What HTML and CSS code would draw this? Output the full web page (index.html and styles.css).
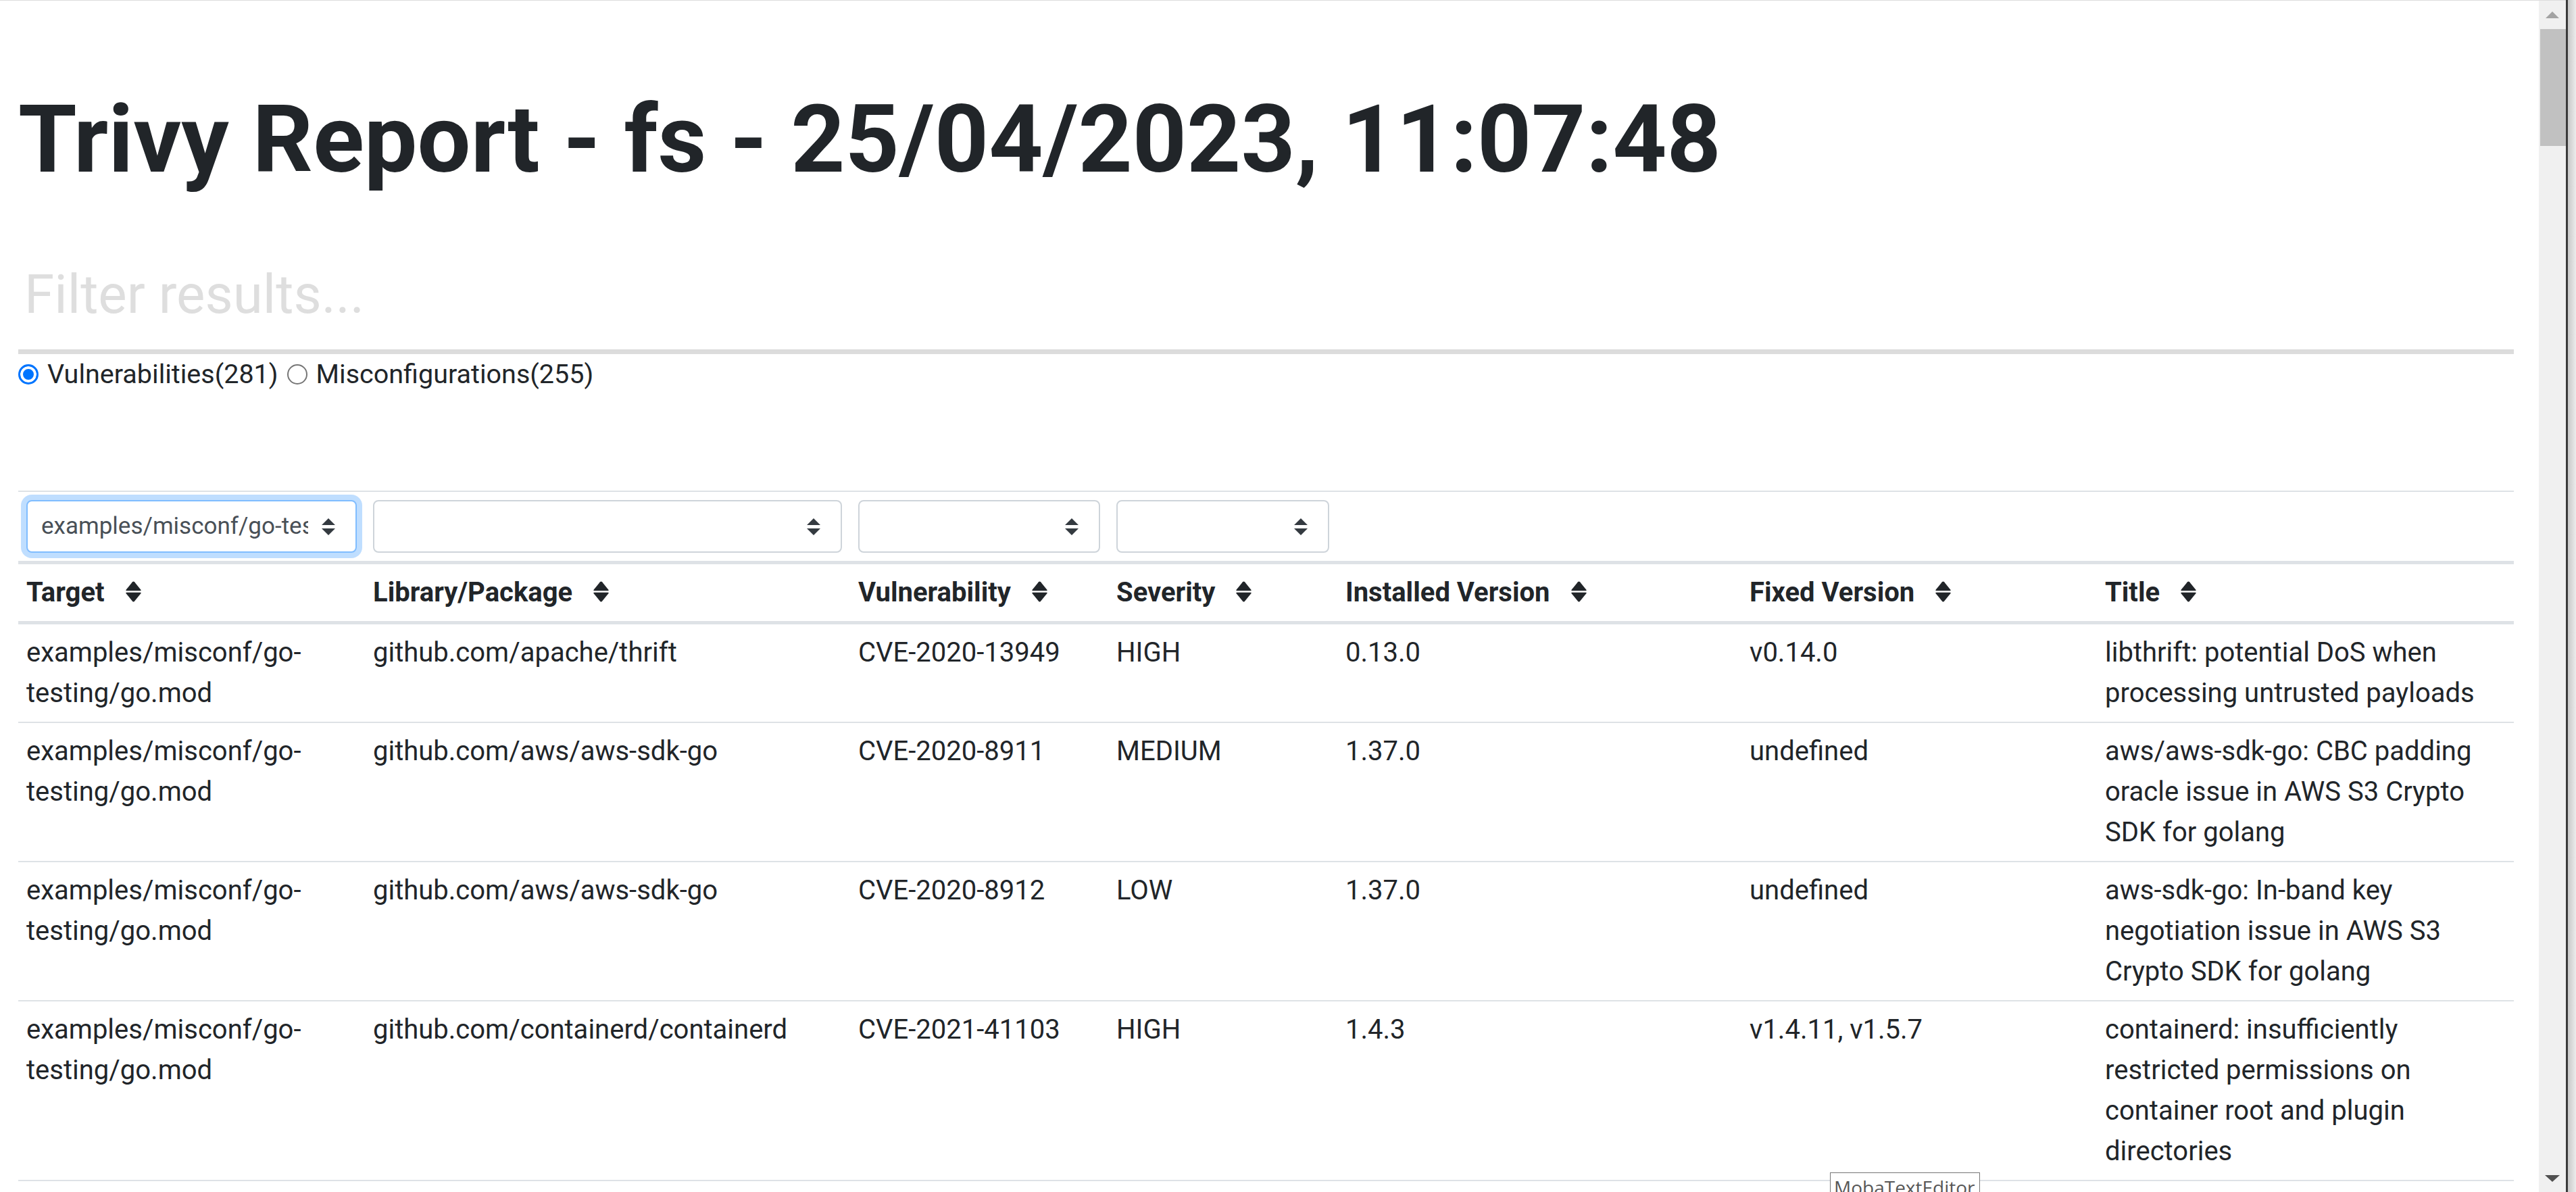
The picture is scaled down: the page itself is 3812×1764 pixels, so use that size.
FILE: index.html
```html
<!DOCTYPE html>
<html lang="en">
<head>
<meta charset="utf-8">
<title>Trivy Report</title>
<link rel="stylesheet" href="styles.css">
</head>
<body>
<div class="screen">
  <div class="window">
    <div class="viewport">
      <main class="report">
        <h1 class="title">Trivy Report - fs - 25/04/2023, 11:07:48</h1>
        <input class="filter" type="text" placeholder="Filter results...">
        <div class="tabs">
          <label class="tab"><input class="radio" type="radio" name="kind" checked><span>Vulnerabilities(281)</span></label>
          <label class="tab"><input class="radio" type="radio" name="kind"><span>Misconfigurations(255)</span></label>
        </div>
        <table class="results">
          <colgroup>
            <col class="c-target"><col class="c-lib"><col class="c-vuln"><col class="c-sev"><col class="c-inst"><col class="c-fixed"><col class="c-title">
          </colgroup>
          <thead>
            <tr class="filters">
              <th><div class="sel focused"><span class="sel-text">examples/misconf/go-testing/go.mod</span><svg class="sel-arrow" viewBox="0 0 4 5" width="20" height="25"><path d="M2 0L0 2h4zm0 5L0 3h4z"/></svg></div></th>
              <th><div class="sel"><span class="sel-text"></span><svg class="sel-arrow" viewBox="0 0 4 5" width="20" height="25"><path d="M2 0L0 2h4zm0 5L0 3h4z"/></svg></div></th>
              <th><div class="sel"><span class="sel-text"></span><svg class="sel-arrow" viewBox="0 0 4 5" width="20" height="25"><path d="M2 0L0 2h4zm0 5L0 3h4z"/></svg></div></th>
              <th><div class="sel"><span class="sel-text"></span><svg class="sel-arrow" viewBox="0 0 4 5" width="20" height="25"><path d="M2 0L0 2h4zm0 5L0 3h4z"/></svg></div></th>
              <th></th>
              <th></th>
              <th></th>
            </tr>
            <tr class="heads">
              <th>Target<svg class="sort" viewBox="0 0 23 31" width="23" height="31"><path d="M10 1.3Q11.5-.4 13 1.3L22.2 12.4Q23.6 14.2 21.4 14.2H1.6Q-.6 14.2.8 12.4Z"/><path d="M1.6 16.8H21.4Q23.6 16.8 22.2 18.6L13 29.7Q11.5 31.4 10 29.7L.8 18.6Q-.6 16.8 1.6 16.8Z"/></svg></th>
              <th>Library/Package<svg class="sort" viewBox="0 0 23 31" width="23" height="31"><path d="M10 1.3Q11.5-.4 13 1.3L22.2 12.4Q23.6 14.2 21.4 14.2H1.6Q-.6 14.2.8 12.4Z"/><path d="M1.6 16.8H21.4Q23.6 16.8 22.2 18.6L13 29.7Q11.5 31.4 10 29.7L.8 18.6Q-.6 16.8 1.6 16.8Z"/></svg></th>
              <th>Vulnerability<svg class="sort" viewBox="0 0 23 31" width="23" height="31"><path d="M10 1.3Q11.5-.4 13 1.3L22.2 12.4Q23.6 14.2 21.4 14.2H1.6Q-.6 14.2.8 12.4Z"/><path d="M1.6 16.8H21.4Q23.6 16.8 22.2 18.6L13 29.7Q11.5 31.4 10 29.7L.8 18.6Q-.6 16.8 1.6 16.8Z"/></svg></th>
              <th>Severity<svg class="sort" viewBox="0 0 23 31" width="23" height="31"><path d="M10 1.3Q11.5-.4 13 1.3L22.2 12.4Q23.6 14.2 21.4 14.2H1.6Q-.6 14.2.8 12.4Z"/><path d="M1.6 16.8H21.4Q23.6 16.8 22.2 18.6L13 29.7Q11.5 31.4 10 29.7L.8 18.6Q-.6 16.8 1.6 16.8Z"/></svg></th>
              <th>Installed Version<svg class="sort" viewBox="0 0 23 31" width="23" height="31"><path d="M10 1.3Q11.5-.4 13 1.3L22.2 12.4Q23.6 14.2 21.4 14.2H1.6Q-.6 14.2.8 12.4Z"/><path d="M1.6 16.8H21.4Q23.6 16.8 22.2 18.6L13 29.7Q11.5 31.4 10 29.7L.8 18.6Q-.6 16.8 1.6 16.8Z"/></svg></th>
              <th>Fixed Version<svg class="sort" viewBox="0 0 23 31" width="23" height="31"><path d="M10 1.3Q11.5-.4 13 1.3L22.2 12.4Q23.6 14.2 21.4 14.2H1.6Q-.6 14.2.8 12.4Z"/><path d="M1.6 16.8H21.4Q23.6 16.8 22.2 18.6L13 29.7Q11.5 31.4 10 29.7L.8 18.6Q-.6 16.8 1.6 16.8Z"/></svg></th>
              <th>Title<svg class="sort" viewBox="0 0 23 31" width="23" height="31"><path d="M10 1.3Q11.5-.4 13 1.3L22.2 12.4Q23.6 14.2 21.4 14.2H1.6Q-.6 14.2.8 12.4Z"/><path d="M1.6 16.8H21.4Q23.6 16.8 22.2 18.6L13 29.7Q11.5 31.4 10 29.7L.8 18.6Q-.6 16.8 1.6 16.8Z"/></svg></th>
            </tr>
          </thead>
          <tbody>
            <tr>
              <td>examples/misconf/go-testing/go.mod</td>
              <td>github.com/apache/thrift</td>
              <td>CVE-2020-13949</td>
              <td>HIGH</td>
              <td>0.13.0</td>
              <td>v0.14.0</td>
              <td>libthrift: potential DoS when processing untrusted payloads</td>
            </tr>
            <tr>
              <td>examples/misconf/go-testing/go.mod</td>
              <td>github.com/aws/aws-sdk-go</td>
              <td>CVE-2020-8911</td>
              <td>MEDIUM</td>
              <td>1.37.0</td>
              <td>undefined</td>
              <td>aws/aws-sdk-go: CBC padding oracle issue in AWS S3 Crypto SDK for golang</td>
            </tr>
            <tr>
              <td>examples/misconf/go-testing/go.mod</td>
              <td>github.com/aws/aws-sdk-go</td>
              <td>CVE-2020-8912</td>
              <td>LOW</td>
              <td>1.37.0</td>
              <td>undefined</td>
              <td>aws-sdk-go: In-band key negotiation issue in AWS S3 Crypto SDK for golang</td>
            </tr>
            <tr>
              <td>examples/misconf/go-testing/go.mod</td>
              <td>github.com/containerd/containerd</td>
              <td>CVE-2021-41103</td>
              <td>HIGH</td>
              <td>1.4.3</td>
              <td>v1.4.11, v1.5.7</td>
              <td>containerd: insufficiently restricted permissions on container root and plugin directories</td>
            </tr>
          </tbody>
        </table>
      </main>
    </div>
    <div class="scrollbar">
      <div class="sb-btn sb-up"><svg viewBox="0 0 20 10" width="20" height="10"><path d="M10 0L20 10H0Z"/></svg></div>
      <div class="sb-thumb"></div>
      <div class="sb-track"></div>
      <div class="sb-btn sb-down"><svg viewBox="0 0 22 10" width="22" height="10"><path d="M0 0H22L11 10Z"/></svg></div>
    </div>
  </div>
  <div class="edge"></div>
</div>
<div class="tooltip">MobaTextEditor</div>
</body>
</html>
```

FILE: styles.css
```css
* {
  box-sizing: border-box;
}

html,
body {
  margin: 0;
  padding: 0;
  height: 1764px;
  overflow: hidden;
  background: #ffffff;
}

body {
  font-family: Roboto, "Liberation Sans", sans-serif;
  color: #212529;
  position: relative;
}

.screen {
  display: flex;
  width: 3812px;
  height: 1764px;
}

.window {
  display: flex;
  width: 3797px;
  height: 1764px;
  border-top: 1px solid #dcdcdc;
}

.viewport {
  width: 3757px;
  height: 100%;
  overflow: hidden;
}

.report {
  padding: 0 37px 0 27px;
}

.title {
  margin: 121px 0 0;
  font-size: 140px;
  line-height: 168px;
  font-weight: 700;
  color: #212529;
  white-space: nowrap;
}

.filter {
  display: block;
  width: 100%;
  height: 170px;
  margin: 64px 0 0;
  padding: 0 9px;
  border: none;
  border-bottom: 7px solid #dcdcdc;
  font-family: Roboto, "Liberation Sans", sans-serif;
  font-size: 80px;
  color: #212529;
  background: #ffffff;
  outline: none;
}

.filter::placeholder {
  color: #dedede;
}

.tabs {
  display: flex;
  align-items: center;
  gap: 13px;
  height: 52px;
  margin-top: 4px;
  font-size: 39.5px;
  line-height: 52px;
}

.tab {
  display: inline-flex;
  align-items: center;
  gap: 13px;
}

.radio {
  appearance: none;
  -webkit-appearance: none;
  margin: 0;
  width: 30px;
  height: 30px;
  border-radius: 50%;
  border: 2px solid #767676;
  background: #ffffff;
  flex: none;
}

.radio:checked {
  border: 3px solid #0075ff;
  background: #0075ff;
  box-shadow: inset 0 0 0 4px #ffffff;
}

.results {
  width: 100%;
  margin-top: 146px;
  border-collapse: collapse;
  table-layout: fixed;
  font-size: 40px;
  line-height: 60px;
}

.c-target { width: 513px; }
.c-lib { width: 718px; }
.c-vuln { width: 382px; }
.c-sev { width: 339px; }
.c-inst { width: 598px; }
.c-fixed { width: 526px; }
.c-title { width: 617px; }

.results th,
.results td {
  padding: 12px;
  text-align: left;
  vertical-align: top;
}

.results td {
  border-bottom: 2px solid #dee2e6;
  font-weight: 400;
}

.filters th {
  border-top: 2px solid #dee2e6;
  border-bottom: 5px solid #dee2e6;
  font-weight: 400;
}

.heads th {
  border-bottom: 5px solid #dee2e6;
  font-weight: 700;
  white-space: nowrap;
}

.sort {
  margin-left: 31px;
  vertical-align: -1px;
  fill: #212529;
}

.sel {
  display: flex;
  align-items: center;
  width: 100%;
  height: 78px;
  padding: 0 30px 0 20px;
  border: 2px solid #ced4da;
  border-radius: 8px;
  background: #ffffff;
  font-size: 35px;
  line-height: 52px;
  color: #495057;
}

.sel.focused {
  border-color: #80bdff;
  box-shadow: 0 0 0 8px rgba(0, 123, 255, 0.25);
}

.sel-text {
  flex: 1;
  min-width: 0;
  overflow: hidden;
  white-space: nowrap;
}

.sel-arrow {
  flex: none;
  margin-left: 20px;
  fill: #343a40;
}

.scrollbar {
  display: flex;
  flex-direction: column;
  width: 40px;
  height: 100%;
  background: #f0f0f0;
}

.sb-btn {
  display: flex;
  align-items: center;
  justify-content: center;
  flex: none;
}

.sb-up {
  height: 42px;
  fill: #a3a3a3;
}

.sb-thumb {
  height: 173px;
  margin-left: 2px;
  background: #c1c1c1;
  flex: none;
}

.sb-track {
  flex: 1;
}

.sb-down {
  height: 40px;
  fill: #505050;
}

.edge {
  width: 15px;
  height: 100%;
  border-left: 3px solid #3a3a3a;
  background: linear-gradient(to right, #c8c8c8, #ececec);
}

.tooltip {
  position: absolute;
  left: 2708px;
  top: 1735px;
  width: 222px;
  height: 50px;
  padding: 2px 5px;
  border: 1px solid #767676;
  background: #ffffff;
  font-family: "Open Sans", "Noto Sans", sans-serif;
  font-size: 28px;
  line-height: 38px;
  color: #575757;
  white-space: nowrap;
}
```
